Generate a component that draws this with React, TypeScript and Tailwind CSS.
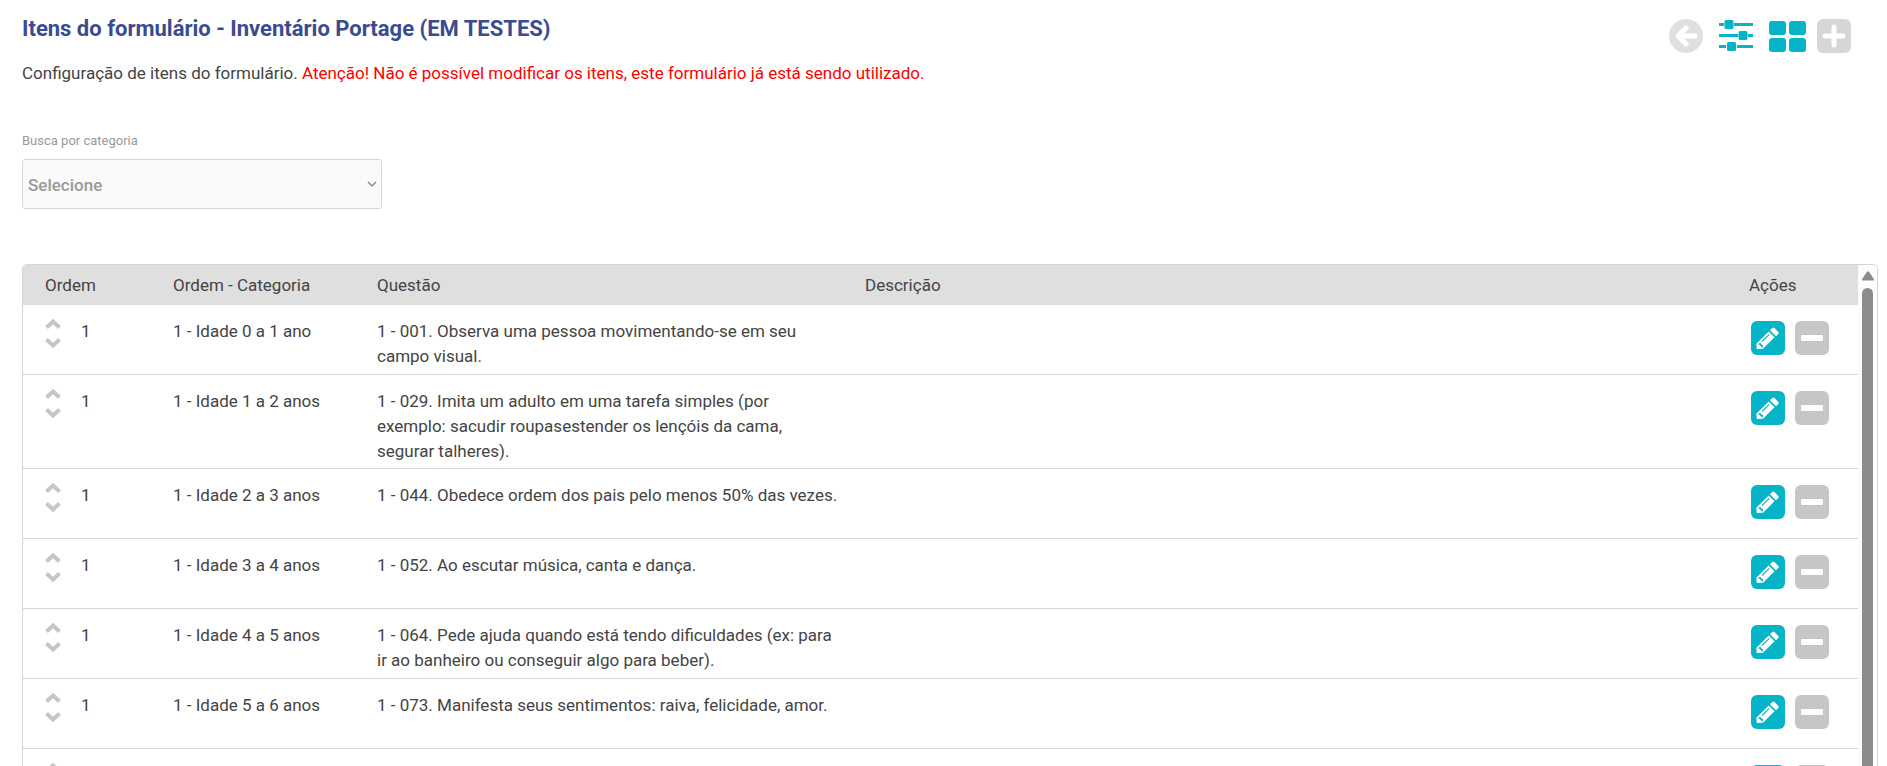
import { useState } from "react";

type Item = { ordem: string; categoria: string; questao: string };

const ITEMS: Item[] = [
  { ordem: "1", categoria: "1 - Idade 0 a 1 ano", questao: "1 - 001. Observa uma pessoa movimentando-se em seu campo visual." },
  { ordem: "1", categoria: "1 - Idade 1 a 2 anos", questao: "1 - 029. Imita um adulto em uma tarefa simples (por exemplo: sacudir roupasestender os lençóis da cama, segurar talheres)." },
  { ordem: "1", categoria: "1 - Idade 2 a 3 anos", questao: "1 - 044. Obedece ordem dos pais pelo menos 50% das vezes." },
  { ordem: "1", categoria: "1 - Idade 3 a 4 anos", questao: "1 - 052. Ao escutar música, canta e dança." },
  { ordem: "1", categoria: "1 - Idade 4 a 5 anos", questao: "1 - 064. Pede ajuda quando está tendo dificuldades (ex: para ir ao banheiro ou conseguir algo para beber)." },
  { ordem: "1", categoria: "1 - Idade 5 a 6 anos", questao: "1 - 073. Manifesta seus sentimentos: raiva, felicidade, amor." },
  { ordem: "", categoria: "", questao: "" },
];

function BackIcon() {
  return (
    <svg width="34" height="34" viewBox="0 0 34 34" fill="none">
      <circle cx="17" cy="17" r="17" fill="#e0e0e0" />
      <path d="M18.500 7.500L9 17l9.500 9.500M9.500 17H26" stroke="#fff" strokeWidth="5" strokeLinejoin="round" />
      <path d="M24 17h2" stroke="#fff" strokeWidth="5" strokeLinecap="round" />
    </svg>
  );
}

function SlidersIcon() {
  return (
    <svg width="34" height="32" viewBox="0 0 34 32" fill="#06b4c8">
      <path d="M0 3h5v3H0zM15 3h19v3H15zM0 14h19v3H0zM29 14h5v3h-5zM0 25h7v3H0zM18 25h16v3H18z" />
      <rect x="5.500" y="0" width="9" height="9" rx="1.500" />
      <rect x="19.500" y="11" width="9" height="9" rx="1.500" />
      <rect x="8" y="22" width="9" height="9" rx="1.500" />
    </svg>
  );
}

function GridIcon() {
  return (
    <svg width="37" height="31" viewBox="0 0 37 31" fill="#06b4c8">
      <rect x="0" y="0" width="17" height="14" rx="3" />
      <rect x="20" y="0" width="17" height="14" rx="3" />
      <rect x="0" y="17" width="17" height="14" rx="3" />
      <rect x="20" y="17" width="17" height="14" rx="3" />
    </svg>
  );
}

function PlusIcon() {
  return (
    <svg width="34" height="34" viewBox="0 0 34 34">
      <rect width="34" height="34" rx="6" fill="#d6d6d6" />
      <path d="M17 8v18M8 17h18" stroke="#fff" strokeWidth="5" strokeLinecap="round" />
    </svg>
  );
}

function PencilIcon() {
  return (
    <svg width="34" height="34" viewBox="0 0 34 34">
      <rect width="34" height="34" rx="6" fill="#06b4c8" />
      <path d="M17.700 10.500L23.500 16.300 12 27.800 5.800 28 5.300 22.700z" fill="#fff" />
      <path d="M19 9.200l2.300-2.300q1.100-.9 2.200.1l3.800 3.900q.9 1 0 2l-2.400 2.300z" fill="#fff" />
      <path d="M11 20.500l7.300-7.100" stroke="#06b4c8" strokeWidth="1.100" />
      <path d="M7.500 23.300l1.700-.5.700 1.500 1.500.5-.4 1.700" fill="none" stroke="#06b4c8" strokeWidth="1.500" />
    </svg>
  );
}

function MinusIcon() {
  return (
    <svg width="34" height="34" viewBox="0 0 34 34">
      <rect width="34" height="34" rx="6" fill="#c6c6c6" />
      <rect x="6" y="14" width="22" height="6" rx="1" fill="#fff" />
    </svg>
  );
}

function Arrow({ down = false }: { down?: boolean }) {
  return (
    <svg width="16" height="10" viewBox="0 0 16 10" fill="none" stroke="#c6c6c6" strokeWidth="4">
      <path d={down ? "M1.500 1.500L8 7.500l6.500-6" : "M1.500 8.500L8 2.500l6.500 6"} />
    </svg>
  );
}

function Row({ item }: { item: Item }) {
  return (
    <tr className="h-[70px] align-top leading-[25px] [&>td]:border-b [&>td]:border-[#d6d6d6]">
      <td className="pt-[14px] pl-[22px]">
        <div className="flex gap-5">
          <div className="flex flex-col gap-[9px]">
            <button type="button" aria-label="Mover para cima"><Arrow /></button>
            <button type="button" aria-label="Mover para baixo"><Arrow down /></button>
          </div>
          <span>{item.ordem}</span>
        </div>
      </td>
      <td className="pt-[14px] pl-[22px]">{item.categoria}</td>
      <td className="pt-[14px] pr-1 pb-1 pl-[22px]">{item.questao}</td>
      <td />
      <td className="pt-4 pl-6">
        <div className="flex gap-[10px]">
          <button type="button" aria-label="Editar"><PencilIcon /></button>
          <button type="button" aria-label="Remover"><MinusIcon /></button>
        </div>
      </td>
    </tr>
  );
}

export default function App() {
  const [categoria, setCategoria] = useState("");
  return (
    <main className="flex h-screen flex-col overflow-hidden bg-white pl-[22px] font-['Roboto',sans-serif] text-[17px] leading-[26px] text-[#444] [&_button]:block [&_button]:cursor-pointer">
      <header className="flex items-start justify-between pt-[15px] pr-9">
        <div>
          <h1 className="text-[22px] leading-7 font-bold text-[#394c8f]">Itens do formulário - Inventário Portage (EM TESTES)</h1>
          <p className="mt-[17px]">
            Configuração de itens do formulário.{" "}
            <span className="text-[#ff0000]">Atenção! Não é possível modificar os itens, este formulário já está sendo utilizado.</span>
          </p>
        </div>
        <nav className="flex items-center gap-4 pt-1">
          <button type="button" aria-label="Voltar"><BackIcon /></button>
          <button type="button" aria-label="Filtros"><SlidersIcon /></button>
          <div className="flex items-center gap-[11px]">
            <button type="button" aria-label="Categorias"><GridIcon /></button>
            <button type="button" aria-label="Adicionar"><PlusIcon /></button>
          </div>
        </nav>
      </header>

      <section className="mt-[45px] flex w-[360px] flex-col">
        <label htmlFor="categoria" className="text-[13px] leading-5 text-[#9a9a9a]">Busca por categoria</label>
        <div className="relative mt-2">
          <select
            id="categoria"
            value={categoria}
            onChange={(e) => setCategoria(e.target.value)}
            className="h-[50px] w-full appearance-none rounded-[3px] border border-[#d6d6d6] bg-[#fafafa] px-[5px] pt-[2px] font-medium text-[#999]"
          >
            <option value="">Selecione</option>
          </select>
          <svg className="pointer-events-none absolute top-[22px] right-[5px]" width="10" height="7" viewBox="0 0 10 7" fill="none" stroke="#8a8a8a" strokeWidth="1.500">
            <path d="M1 1l4 4 4-4" />
          </svg>
        </div>
      </section>

      <section className="mt-[55px] mr-[9px] flex min-h-0 flex-1 overflow-hidden rounded-t-[5px] border-x border-t border-[#d6d6d6]">
        <div className="min-w-0 flex-1">
          <table className="w-full table-fixed border-separate border-spacing-0 text-left">
            <thead>
              <tr className="h-10 bg-[#dfdfdf] [&>th]:pl-[22px] [&>th]:font-normal">
                <th className="w-[128px]">Ordem</th>
                <th className="w-[204px]">Ordem - Categoria</th>
                <th className="w-[488px]">Questão</th>
                <th>Descrição</th>
                <th className="w-[131px]">Ações</th>
              </tr>
            </thead>
            <tbody>
              {ITEMS.map((item, i) => <Row key={i} item={item} />)}
            </tbody>
          </table>
        </div>
        <div className="flex w-[19px] flex-col items-center gap-[7px] bg-[#fcfcfc] pt-[6px]">
          <svg width="12" height="10" viewBox="0 0 12 10" fill="#8b8b8b">
            <path d="M5 .8q1-1 2 0l4.700 7q.7 1.700-1 1.700H1.300q-1.700 0-1-1.700z" />
          </svg>
          <div className="w-[11px] flex-1 rounded-t-full bg-[#8b8b8b]" />
        </div>
      </section>
    </main>
  );
}
